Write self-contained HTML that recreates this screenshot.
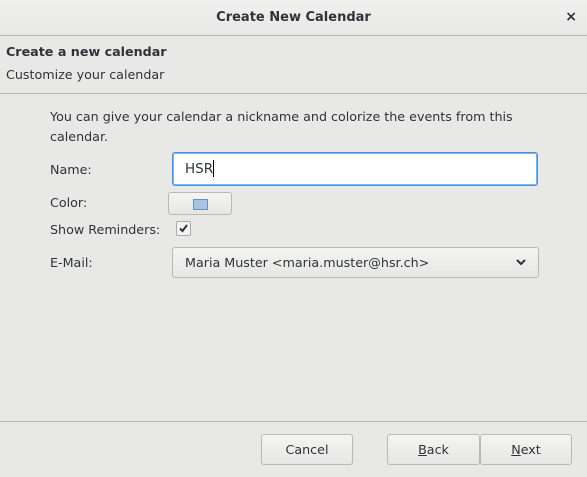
<!DOCTYPE html><html><head><style>
body{margin:0;width:587px;height:477px;background:#e8e8e7;font-family:"DejaVu Sans",sans-serif;font-size:12.7px;color:#2e3436;position:relative;overflow:hidden}
.a{position:absolute}
.title{left:0;top:0;width:587px;height:35px;background:linear-gradient(#f0f0ef,#e8e8e7);border-bottom:1px solid #b6b6b3;text-align:center;line-height:36px;font-weight:bold;font-size:13px}
.btn{position:absolute;border:1px solid #b8b8b5;border-radius:3px;background:linear-gradient(#f4f4f3,#e6e6e5);text-align:center;box-sizing:border-box}
</style></head><body>
<div class="a title">Create New Calendar</div>
<div class="a" style="right:10px;top:9px;font-size:14px;font-weight:bold">×</div>
<div class="a" style="left:6px;top:44px;font-weight:bold">Create a new calendar</div>
<div class="a" style="left:6px;top:67px">Customize your calendar</div>
<div class="a" style="left:0;top:93px;width:587px;height:1px;background:#b6b6b3"></div>
<div class="a" style="left:50px;top:107px;line-height:20px;width:470px">You can give your calendar a nickname and colorize the events from this calendar.</div>
<div class="a" style="left:50px;top:162px">Name:</div>
<div class="a" style="left:172px;top:152px;width:366px;height:34px;box-sizing:border-box;border:1px solid #4a90d9;border-radius:3px;background:#fff;box-shadow:inset 0 0 0 1px #80b3e8"></div>
<div class="a" style="left:185px;top:160px;font-size:13.5px">HSR<span style="display:inline-block;width:1px;height:17px;background:#000;vertical-align:-4px"></span></div>
<div class="a" style="left:50px;top:195px">Color:</div>
<div class="btn" style="left:168px;top:192px;width:64px;height:23px"><div style="width:13px;height:9px;margin:6px auto;background:#a9c3e2;border:1px solid #6b8fb8"></div></div>
<div class="a" style="left:50px;top:222px">Show Reminders:</div>
<div class="a" style="left:176px;top:221px;width:13px;height:13px;border:1px solid #aaa;border-radius:2px;background:#f4f4f3"><svg width="13" height="13"><path d="M3 6.5L5.5 9L10 3" stroke="#2e3436" stroke-width="2" fill="none"/></svg></div>
<div class="a" style="left:50px;top:255px">E-Mail:</div>
<div class="btn" style="left:172px;top:247px;width:367px;height:31px;text-align:left;padding-left:12px;line-height:29px">Maria Muster &lt;maria.muster@hsr.ch&gt;
<svg style="position:absolute;right:12px;top:11px" width="10" height="7"><path d="M1 1L5 5L9 1" stroke="#2e3436" stroke-width="2" fill="none"/></svg></div>
<div class="a" style="left:0;top:421px;width:587px;height:1px;background:#b6b6b3"></div>
<div class="btn" style="left:261px;top:434px;width:92px;height:31px;line-height:29px">Cancel</div>
<div class="btn" style="left:387px;top:434px;width:93px;height:31px;line-height:29px"><u>B</u>ack</div>
<div class="btn" style="left:480px;top:434px;width:92px;height:31px;line-height:29px"><u>N</u>ext</div>
</body></html>
